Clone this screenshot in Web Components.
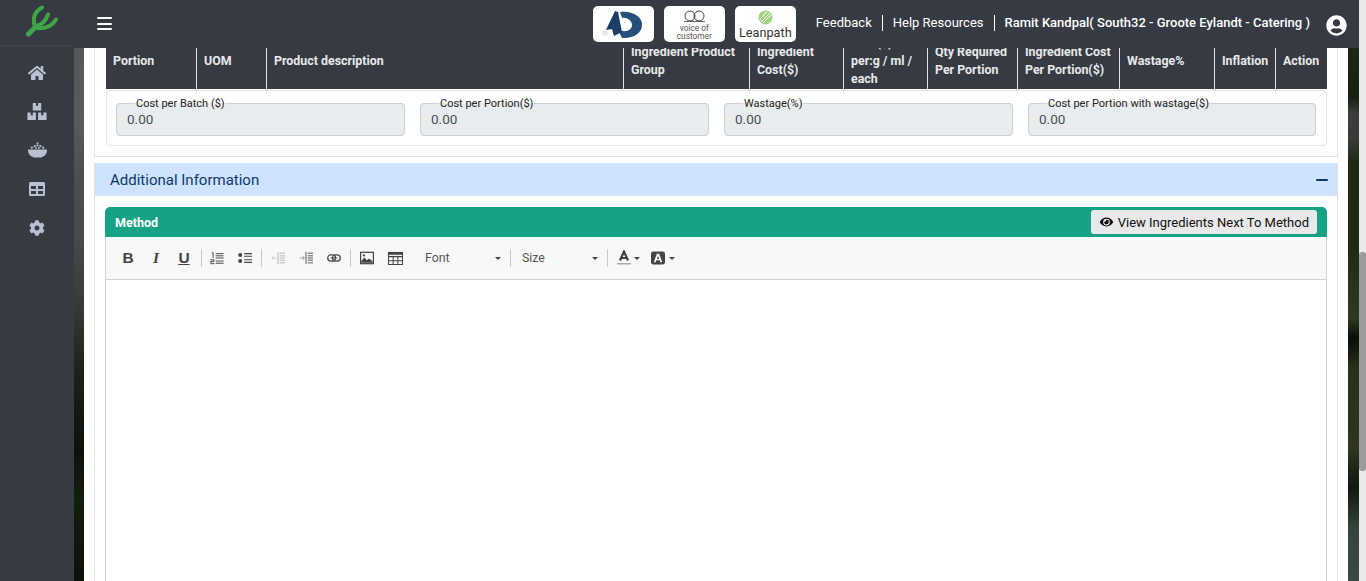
<!DOCTYPE html>
<html><head><meta charset="utf-8">
<style>
html,body{margin:0;height:581px;overflow:hidden;font-family:Roboto,"Liberation Sans",sans-serif;background:#2a2d2a}
</style></head><body>
<app-shell></app-shell>
<template id="t-shell"><style>
:host{display:flex;height:581px}
.col{flex:1;min-width:0;display:flex;flex-direction:column}
.body{flex:1;display:flex;min-height:0}
.bg{flex:1;display:flex;min-width:0;overflow:hidden;background:
linear-gradient(180deg,#55565a 0,#5a5a5c 70px,#4c4c4c 140px,#48494a 190px,#3a3c38 250px,#1c2016 330px,#0c130a 400px,#10200e 450px,#0a1208 533px) left top/10px 100% no-repeat,
linear-gradient(180deg,#1a2a16 0,#16200f 50px,#3c3d3a 65px,#3a3b38 90px,#1b2a14 115px,#1c2c14 200px,#2c3a20 270px,#0a0e06 290px,#28301c 320px,#2e3420 400px,#0f1a0e 440px,#34443a 480px,#3a4a40 533px) right top/11px 100% no-repeat}
.page{width:1264px;margin-left:10px;background:#fff;padding:0 10px;box-sizing:border-box;overflow:hidden;flex:none}
</style>
<div class="col"><app-header></app-header>
<div class="body"><app-sidebar></app-sidebar>
<div class="bg"><div class="page"><recipe-costs></recipe-costs><info-panel></info-panel></div></div></div></div>
<page-scrollbar></page-scrollbar>
</template>
<script>
const icons={
home:'<svg width="20" height="16" viewBox="0 0 576 512"><path fill="#b9c0d0" d="M280 148 96 300v164c0 9 7 16 16 16l112-.3c9 0 16-7 16-16V368c0-9 7-16 16-16h64c9 0 16 7 16 16v95.6c0 9 7 16 16 16L464 480c9 0 16-7 16-16V300L295 148c-4-3-11-3-15 0zM572 251l-84-69V44c0-7-5-12-12-12h-56c-7 0-12 5-12 12v72l-89-74c-18-14-43-14-61 0L4 251c-5 4-6 12-2 17l26 31c4 5 12 6 17 2L280 107c4-3 11-3 15 0l235 194c5 4 13 3 17-2l26-31c4-5 3-13-1-17z"/></svg>',
boxes:'<svg width="20" height="17" viewBox="0 0 576 512"><path fill="#b9c0d0" d="M560 288h-80v96l-32-21-32 21v-96h-80c-9 0-16 7-16 16v192c0 9 7 16 16 16h224c9 0 16-7 16-16V304c0-9-7-16-16-16zM176 224h224c9 0 16-7 16-16V16c0-9-7-16-16-16h-80v96l-32-21-32 21V0h-80c-9 0-16 7-16 16v192c0 9 7 16 16 16zm64 64h-80v96l-32-21-32 21v-96H16c-9 0-16 7-16 16v192c0 9 7 16 16 16h224c9 0 16-7 16-16V304c0-9-7-16-16-16z"/></svg>',
bowl:'<svg width="19" height="16" viewBox="0 0 20 17"><g fill="#b9c0d0"><path d="M0 8h20v1.200c0 3.400-2.600 6-5.500 6.800v.6H5.500v-.6C2.600 15.200 0 12.600 0 9.200z"/><circle cx="4" cy="6" r="1.200"/><circle cx="7" cy="4.500" r="1.200"/><circle cx="10" cy="3.500" r="1.200"/><circle cx="13" cy="4.500" r="1.200"/><circle cx="16" cy="6" r="1.200"/><circle cx="8.500" cy="6.300" r="1"/><circle cx="11.500" cy="6.300" r="1"/><circle cx="10" cy="1.300" r="1"/></g></svg>',
table:'<svg width="16" height="14" viewBox="0 0 16 14"><path fill="#b9c0d0" fill-rule="evenodd" d="M1.500 0h13A1.500 1.500 0 0 1 16 1.500v11a1.500 1.500 0 0 1-1.500 1.500h-13A1.500 1.500 0 0 1 0 12.500v-11A1.500 1.500 0 0 1 1.500 0zM2 4v3h5V4zm7 0v3h5V4zM2 9v3h5V9zm7 0v3h5V9z"/></svg>',
cog:'<svg width="16" height="16" viewBox="0 0 512 512"><path fill="#b9c0d0" d="M487 316l-43-25c4-23 4-47 0-70l43-25c5-3 7-9 5-14-11-36-30-68-55-95-4-4-10-5-15-2l-43 25c-18-15-39-27-61-35V25c0-6-4-11-9-12-37-8-75-8-110 0-5 1-9 6-9 12v50c-22 8-43 20-61 35L86 85c-5-3-11-2-15 2-25 27-44 59-55 95-2 5 0 11 5 14l43 25c-4 23-4 47 0 70l-43 25c-5 3-7 9-5 14 11 36 30 68 55 95 4 4 10 5 15 2l43-25c18 15 39 27 61 35v50c0 6 4 11 9 12 37 8 75 8 110 0 5-1 9-6 9-12v-50c22-8 43-20 61-35l43 25c5 3 11 2 15-2 25-27 44-59 55-95 2-5 0-11-5-14zM256 336c-44 0-80-36-80-80s36-80 80-80 80 36 80 80-36 80-80 80z"/></svg>'};
function def(name,html){customElements.define(name,class extends HTMLElement{constructor(){super();const s=this.attachShadow({mode:'open'});s.innerHTML=typeof html==='function'?html(this):html}})}
customElements.define('app-shell',class extends HTMLElement{constructor(){super();this.attachShadow({mode:'open'}).appendChild(document.getElementById('t-shell').content.cloneNode(true))}});

def('app-header',`<style>
:host{display:flex;align-items:center;height:48px;flex:none;background:#353a43;color:#fff;font-size:13px}
.logo{width:74px;height:46px;align-self:flex-start;display:flex;justify-content:center;align-items:center;box-sizing:border-box;border-bottom:1px solid #3f444d;padding:0 0 3px 10px}
.burger{margin-left:23px;width:15px;height:13px;display:flex;flex-direction:column;justify-content:space-between;margin-top:-1px}
.burger i{height:2px;background:#fff;display:block;border-radius:1px}
.sp{flex:1}
.tiles{display:flex;gap:10px;margin-right:20px}
.tile{width:61px;height:36px;background:#fff;border-radius:5px;display:flex;align-items:center;justify-content:center;box-sizing:border-box;overflow:hidden}
.nav{display:flex;align-items:center;margin-top:-2px}
.nav span{padding:0 10px;line-height:16px;border-right:1px solid #fff}
.nav span:last-child{border:0;font-weight:500;padding-right:16px}
.nav span:first-child{padding-left:0}
.user{margin-right:12px;margin-top:3px;display:flex}
.voc{display:flex;flex-direction:column;align-items:center;color:#555;font-size:8.300px;line-height:7px;margin-top:1px}
.lp{display:flex;flex-direction:column;align-items:center;color:#333;font-size:12.700px;line-height:12px}
</style>
<div class="logo"><svg width="34" height="34" viewBox="0 0 34 34" fill="none" stroke="#3fa648" stroke-linecap="round" stroke-linejoin="round"><path stroke-width="5" d="M3.500 30 10 23.500"/><path stroke-width="4" d="M10 23C7.500 15 9 8 17 3.500M11 22C17 21 21 16 23 10.500M12 24C20 25 27 22 31 15.500"/></svg></div>
<div class="burger"><i></i><i></i><i></i></div><div class="sp"></div>
<div class="tiles">
<div class="tile"><svg width="61" height="36" viewBox="0 0 61 36"><path fill="#264f7c" d="M27 6C40 4 50 12 49 19 49 27 40 33 29 32L25 24C33 27 39 24 39 19 39 14 33 11 29 12Z"/><path fill="#1b3f68" d="M22 5 13 24 19 23 21 30 29 26 25 6Z"/><circle cx="12" cy="27" r="3" fill="#e6e8ea"/></svg></div>
<div class="tile"><div class="voc"><svg width="21" height="12" viewBox="0 0 21 12"><circle cx="6" cy="6" r="5" fill="none" stroke="#444" stroke-width="1"/><circle cx="15" cy="6" r="5" fill="none" stroke="#444" stroke-width="1"/><path d="M0 11.500h21" stroke="#444" stroke-width=".8"/></svg><span style="margin-top:3px">voice of</span><span style="margin-top:1px">customer</span></div></div>
<div class="tile"><div class="lp"><svg width="15" height="15" viewBox="0 0 15 15"><circle cx="7.500" cy="7.500" r="7" fill="#9ed582"/><path d="M3 12 12 3M5 13l8-8M2 9l7-7" stroke="#fff" stroke-width="1"/></svg><span style="margin-top:2px">Leanpath</span></div></div>
</div>
<div class="nav"><span>Feedback</span><span>Help Resources</span><span>Ramit Kandpal( South32 - Groote Eylandt - Catering )</span></div>
<div class="user"><svg width="21" height="21" viewBox="0 0 496 512"><path fill="#fff" d="M248 8C111 8 0 119 0 256s111 248 248 248 248-111 248-248S385 8 248 8zm0 96c48.600 0 88 39.400 88 88s-39.400 88-88 88-88-39.400-88-88 39.400-88 88-88zm0 344c-58.700 0-111.300-26.600-146.500-68.200 18.800-35.400 55.600-59.800 98.500-59.800 2.400 0 4.800.4 7.100 1.100 13 4.200 26.600 6.900 40.900 6.900s28-2.700 40.900-6.900c2.300-.7 4.700-1.100 7.100-1.100 42.900 0 79.700 24.400 98.500 59.800C359.300 421.400 306.700 448 248 448z"/></svg></div>`);

def('app-sidebar',`<style>
:host{display:flex;flex-direction:column;align-items:center;width:74px;flex:none;background:#353a43;padding-top:5.500px;box-sizing:border-box}
div{height:38.750px;width:100%;display:flex;justify-content:center;align-items:center;flex:none}
</style><div>${icons.home}</div><div>${icons.boxes}</div><div>${icons.bowl}</div><div>${icons.table}</div><div>${icons.cog}</div>`);

def('page-scrollbar',`<style>
:host{display:block;width:7px;flex:none;background:#e9e9e9;height:581px}
i{display:block;margin-top:252px;height:219px;background:#9b9b9b;border-radius:3px}
</style><i></i>`);

const cols=[['Portion',91],['UOM',70],['Product description',357],['Ingredient Product<br>Group',126],['Ingredient<br>Cost($)',94],['Cost($)<br>per:g / ml /<br>each',84],['Qty Required<br>Per Portion',90],['Ingredient Cost<br>Per Portion($)',102],['Wastage%',95],['Inflation',61],['Action',51]];
def('recipe-costs',`<style>
:host{display:block;border:1px solid #e3e3e3;border-top:0;margin:-15px 0 6px;padding:0 10px 10px 11px;height:124px;box-sizing:border-box}
.head{display:grid;grid-template-columns:${cols.map(c=>c[1]+'px').join(' ')};background:#353a43;color:#e8e9ea;font-size:12.400px;font-weight:700;line-height:18px;height:56px}
.head div{box-sizing:border-box;border-right:1px solid #e4e4e4;padding:0 7px;display:flex;align-items:center}
.head div:last-child{border:0}
.card{border:1px solid #e6e6e6;border-radius:4px;margin-top:1px;height:56px;box-sizing:border-box;padding:6px 10px 0 9px;display:grid;grid-template-columns:289px 289px 289px 288px;gap:15px}
</style>
<div class="head">${cols.map(c=>`<div><span>${c[0]}</span></div>`).join('')}</div>
<div class="card"><cost-field label="Cost per Batch ($)"></cost-field><cost-field label="Cost per Portion($)"></cost-field><cost-field label="Wastage(%)"></cost-field><cost-field label="Cost per Portion with wastage($)"></cost-field></div>`);

def('cost-field',el=>`<style>
:host{display:block}
fieldset{margin:0;padding:0 10px;height:39px;box-sizing:border-box;border:1px solid #ced0d3;border-radius:4px;background:#e9ecef;min-width:0}
legend{font-size:11px;line-height:14px;color:#222;padding:0 1px;margin-left:8px;height:12px}
.v{font-size:13.500px;color:#495057;line-height:16px;margin-top:2px}
</style><fieldset><legend>${el.getAttribute('label')}</legend><div class="v">0.00</div></fieldset>`);

const tb=(s,w=14)=>`<svg width="${w}" height="${w}" viewBox="0 0 16 16">${s}</svg>`;
const L='#444';
def('info-panel',`<style>
:host{display:block;border:1px solid #e3e3e3;border-top:0;border-bottom:0;height:418px;overflow:hidden}
.title{height:33px;background:#cfe2ff;display:flex;align-items:center;justify-content:space-between;padding:0 9px 0 15px;color:#0a3a6e;font-size:15px}
.title i{width:12px;height:2px;background:#0a3a6e;display:block;border-radius:1px}
.wrap{padding:11px 10px 0 10px}
.mh{height:30px;background:#17a185;border-radius:5px 5px 0 0;display:flex;align-items:center;justify-content:space-between;padding:0 10px;color:#fff;font-weight:700;font-size:12.500px}
.btn{height:24px;background:#e9e9e9;border-radius:3px;display:flex;align-items:center;gap:4px;padding:0 8px;color:#111;font-weight:400;font-size:13px}
.ed{border:1px solid #d1d1d1;border-top:0;height:344px}
.tools{height:43px;background:#f8f8f8;border-bottom:1px solid #d1d1d1;box-sizing:border-box;display:flex;align-items:center;padding-left:8px;color:#555}
.tools svg{flex:none;display:block}
.t{width:28px;flex:none;display:flex;justify-content:center}
.ltr{font-size:15.500px;line-height:16px;font-weight:700;color:#444}
.sep{width:1px;height:18px;background:#c9c9c9;flex:none}
.font{font-size:12.300px;color:#555;display:flex;align-items:center;justify-content:space-between;width:76px;flex:none}
.car{width:0;height:0;border:3px solid transparent;border-top:3.500px solid #444;border-bottom:0}
.mini{display:flex;align-items:center}
</style>
<div class="title"><span>Additional Information</span><i></i></div>
<div class="wrap"><div class="mh"><span>Method</span><div class="btn"><svg width="15" height="12" viewBox="0 0 576 512"><path fill="#111" d="M572.500 241.400C518.300 135.600 410.900 64 288 64S57.700 135.600 3.500 241.400a32.400 32.400 0 0 0 0 29.200C57.700 376.400 165.100 448 288 448s230.300-71.600 284.500-177.400a32.400 32.400 0 0 0 0-29.200zM288 400a144 144 0 1 1 144-144 143.900 143.900 0 0 1-144 144zm0-240a95.300 95.300 0 0 0-25.300 3.800 47.900 47.900 0 0 1-66.900 66.900A95.800 95.800 0 1 0 288 160z"/></svg><span>View Ingredients Next To Method</span></div></div>
<div class="ed"><div class="tools">
<div class="t ltr" style="font-family:'Liberation Sans',sans-serif">B</div>
<div class="t ltr" style="font-family:'Liberation Serif',serif;font-style:italic">I</div>
<div class="t ltr" style="font-family:'Liberation Sans',sans-serif;text-decoration:underline">U</div>
<div class="sep" style="margin:0 1px 0 3px"></div>
<div class="t">${tb(`<path d="M6.500 3h9M6.500 5.500h9M6.500 8h9M6.500 11.500h9M6.500 14h9" stroke="${L}" fill="none" stroke-width="1.100"/><path d="M2 2h1.500v6M.5 10h4v2H1v2.500h4" stroke="${L}" fill="none" stroke-width="1.100"/>`)}</div>
<div class="t">${tb(`<circle cx="2.500" cy="4.500" r="2.300" fill="${L}"/><circle cx="2.500" cy="11.500" r="2.300" fill="${L}"/><path d="M7 3h9M7 6h9M7 10h9M7 13h9" stroke="${L}" stroke-width="1.300"/>`)}</div>
<div class="sep" style="margin:0 2px"></div>
<div class="t" style="opacity:.4">${tb(`<path d="M8 1v14M10 2.500h6M10 5.500h6M10 8h6M10 10.500h6M10 13.500h6" stroke="${L}" fill="none" stroke-width="1"/><path d="M1 8h5M1 8l2-2M1 8l2 2" stroke="${L}" fill="none" stroke-width="1" stroke-dasharray="1 1"/>`)}</div>
<div class="t">${tb(`<path d="M8 1v14M10 2.500h6M10 5.500h6M10 8h6M10 10.500h6M10 13.500h6" stroke="${L}" fill="none" stroke-width="1"/><path d="M1 8h5M6 8 4 6M6 8l-2 2" stroke="${L}" fill="none" stroke-width="1" stroke-dasharray="1 1"/>`)}</div>
<div class="t">${tb(`<rect x=".8" y="4.500" width="9" height="7" rx="3.500" fill="none" stroke="${L}" stroke-width="1.400"/><rect x="6.200" y="4.500" width="9" height="7" rx="3.500" fill="none" stroke="${L}" stroke-width="1.400"/><path d="M4 8h8" stroke="${L}"/>`)}</div>
<div class="sep" style="margin:0 2px"></div>
<div class="t">${tb(`<rect x=".7" y="1.500" width="14.600" height="13" fill="none" stroke="${L}" stroke-width="1.400"/><path d="M1.500 13.500v-2l3.500-4 3 3 2.500-2 4 3.500v1.500z" fill="${L}"/><circle cx="4.500" cy="5" r="1.300" fill="${L}"/>`)}</div>
<div class="t">${tb(`<path d="M.5 1.500h15v13H.5zM.5 6h15M.5 10.300h15M5.500 5v9.500M10.500 5v9.500" fill="none" stroke="${L}" stroke-width="1.100"/><path d="M0 1h16v3H0z" fill="${L}"/>`,15)}</div>
<div class="font" style="margin-left:16px"><span>Font</span><span class="car"></span></div>
<div class="sep" style="margin:0 11px 0 9px"></div>
<div class="font"><span>Size</span><span class="car"></span></div>
<div class="sep" style="margin:0 9px"></div>
<div class="mini"><svg width="14" height="16" viewBox="0 0 14 16"><path d="M3 10.500 7 1.500l4 9M4.200 8h5.600" fill="none" stroke="${L}" stroke-width="2.200"/><path d="M0 13h14v1.500H0z" fill="#aaa"/></svg><span class="car" style="margin-left:3px"></span></div>
<div class="mini" style="margin-left:11px"><svg width="14" height="14" viewBox=".5 1 15 14"><path fill="${L}" fill-rule="evenodd" d="M3 1h10a2.500 2.500 0 0 1 2.500 2.500v9A2.500 2.500 0 0 1 13 15H3a2.500 2.500 0 0 1-2.500-2.500v-9A2.500 2.500 0 0 1 3 1zm3.700 2.500L3.500 12.500h2l.7-2h3.600l.7 2h2L9.300 3.500zM6.800 9 8 5.500 9.200 9z"/></svg><span class="car" style="margin-left:4px"></span></div>
</div></div></div>`);
</script>
</body></html>
